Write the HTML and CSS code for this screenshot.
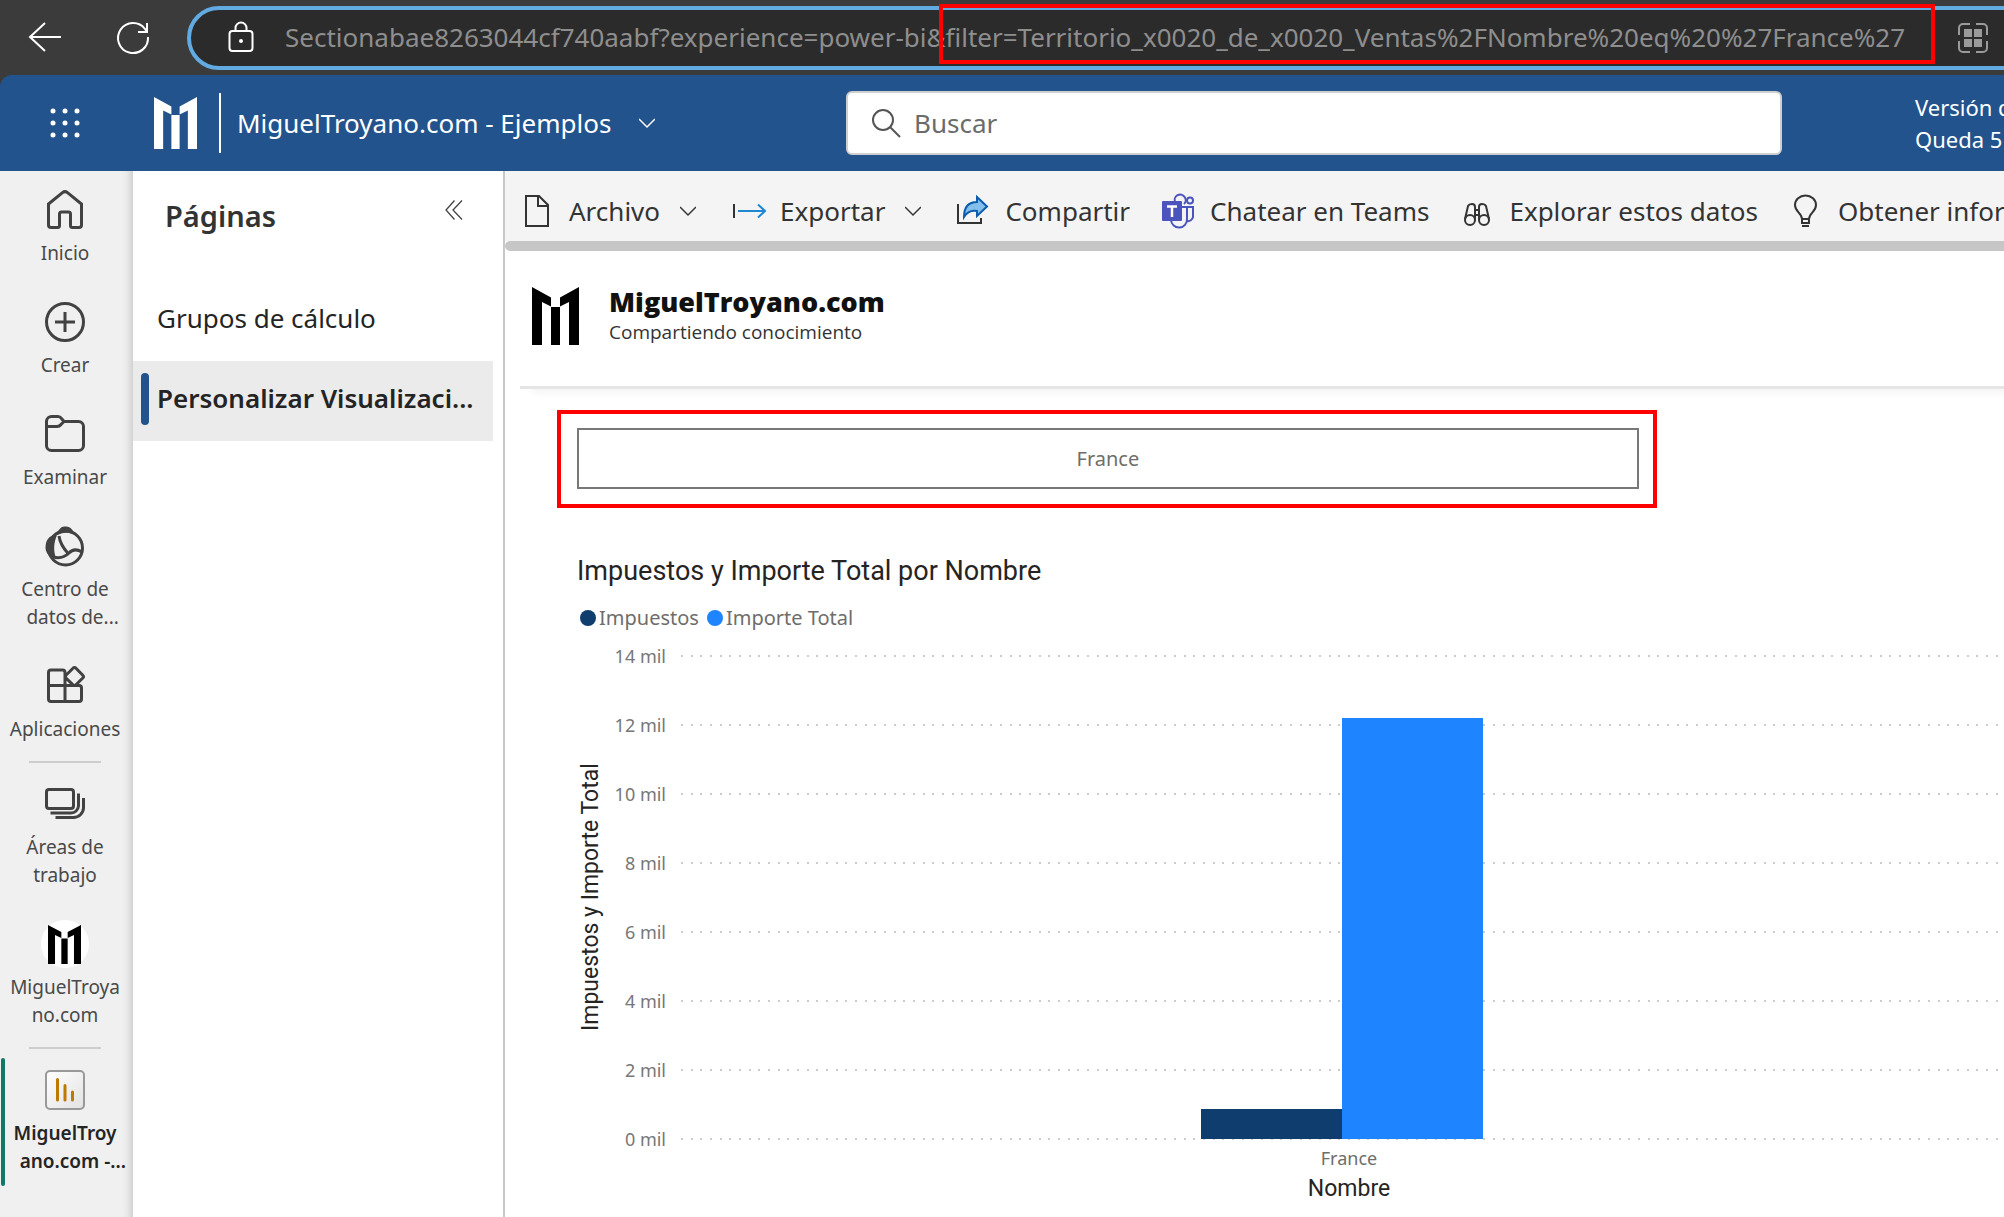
FILE: index.html
```
<!DOCTYPE html>
<html lang="es">
<head>
<meta charset="utf-8">
<title>MiguelTroyano.com - Ejemplos</title>
<link rel="stylesheet" href="styles.css">
</head>
<body>
<svg class="defs" aria-hidden="true">
  <symbol id="logo" viewBox="0 0 47 58" preserveAspectRatio="none">
    <path d="M0 0 19 10.5V19.5L10 15V58H0ZM47 0 28 10.5V19.5L37 15V58H47ZM19 20H28V58H19Z"/>
  </symbol>
  <symbol id="chevron" viewBox="0 0 16 16">
    <path d="M0 4 8 12 16 4" fill="none" stroke="currentColor" stroke-width="1.500"/>
  </symbol>
</svg>

<div class="browser">
  <button class="browser-btn" aria-label="Atrás">
    <svg width="34" height="32" viewBox="0 0 34 32"><path d="M33 15H2M17 1 2 15 17 29" fill="none" stroke="#fff" stroke-width="2"/></svg>
  </button>
  <button class="browser-btn" aria-label="Actualizar">
    <svg width="34" height="34" viewBox="0 0 34 34"><path d="M32 16A15 15 0 1 1 29 8L31 11M31 2V11H22" fill="none" stroke="#fff" stroke-width="2"/></svg>
  </button>
  <div class="address">
    <svg width="26" height="32" viewBox="0 0 26 32"><g fill="none" stroke="#fff" stroke-width="2"><rect x="1.500" y="9" width="23" height="20" rx="3"/><path d="M7.500 9V6A5.500 5.500 0 0 1 18.500 6V9"/></g><circle cx="13" cy="19" r="2" fill="#fff"/></svg>
    <input class="address-input" type="text" aria-label="Dirección" value="Sectionabae8263044cf740aabf?experience=power-bi&amp;filter=Territorio_x0020_de_x0020_Ventas%2FNombre%20eq%20%27France%27">
    <svg class="address-apps" width="30" height="30" viewBox="0 0 30 30"><g fill="none" stroke="#9a9a9a" stroke-width="2"><path d="M1 12V5A4 4 0 0 1 5 1H12M18 1H25A4 4 0 0 1 29 5V12M29 18V25A4 4 0 0 1 25 29H18M12 29H5A4 4 0 0 1 1 25V18"/></g><path d="M6 6H14V14H6ZM16 6H24V14H16ZM6 16H14V24H6ZM16 16H24V24H16Z" fill="#9a9a9a"/></svg>
    <span class="address-mark"></span>
  </div>
</div>

<header class="topbar">
  <button class="waffle" aria-label="Iniciador de aplicaciones">
    <svg width="32" height="32" viewBox="0 0 32 32" fill="#fff"><circle cx="4" cy="4" r="2.500"/><circle cx="16" cy="4" r="2.500"/><circle cx="28" cy="4" r="2.500"/><circle cx="4" cy="16" r="2.500"/><circle cx="16" cy="16" r="2.500"/><circle cx="28" cy="16" r="2.500"/><circle cx="4" cy="28" r="2.500"/><circle cx="16" cy="28" r="2.500"/><circle cx="28" cy="28" r="2.500"/></svg>
  </button>
  <svg class="topbar-logo" fill="#fff"><use href="#logo"/></svg>
  <button class="workspace">MiguelTroyano.com - Ejemplos <svg class="chevron"><use href="#chevron"/></svg></button>
  <label class="search">
    <svg width="30" height="30" viewBox="0 0 30 30"><g fill="none" stroke="#555" stroke-width="2"><circle cx="11" cy="12" r="10"/><path d="M18 19 28 29"/></g></svg>
    <input type="text" placeholder="Buscar" aria-label="Buscar">
  </label>
  <p class="trial">Versión de prueba:<br>Queda 5</p>
</header>

<div class="layout">
  <nav class="rail">
    <a href="#" class="rail-item"><svg viewBox="0 0 40 40"><path d="M3.500 14 17.500 2.600A4 4 0 0 1 22.500 2.600L36.500 14V35A2.500 2.500 0 0 1 34 37.500H27.500A2 2 0 0 1 25.500 35.500V24A2 2 0 0 0 23.500 22H16.500A2 2 0 0 0 14.500 24V35.500A2 2 0 0 1 12.500 37.500H6A2.500 2.500 0 0 1 3.500 35Z"/></svg><span>Inicio</span></a>
    <a href="#" class="rail-item"><svg viewBox="0 0 40 40"><circle cx="20" cy="20" r="18.500"/><path d="M20 10V30M10 20H30"/></svg><span>Crear</span></a>
    <a href="#" class="rail-item"><svg viewBox="0 0 40 40"><path d="M1.500 7A5 5 0 0 1 6.500 2.500H13Q15 2.500 16.500 4.500L19 7.500H33.500A5 5 0 0 1 38.500 12.500V31.500A5 5 0 0 1 33.500 36.500H6.500A5 5 0 0 1 1.500 31.500ZM1.500 12.500H12Q14.500 12.500 16 10.500L19 7.500"/></svg><span>Examinar</span></a>
    <a href="#" class="rail-item"><svg viewBox="0 0 40 40"><circle cx="20.500" cy="22" r="17"/><path d="M14 10C15 18 19 23 23.500 28M8 31C16 33 20 31 24 27C28 22.500 32 23 37 26"/><path d="M11 9.500C15 0 18 .500 21 .500C26 1 28 4 29.500 8.500C22 5.500 17 6.500 11 9.500ZM12 9C3 9 .500 15 .500 22C1 28 5 32 11 32C8 24 9 16 12 9Z" fill="#424242" stroke="none"/></svg><span>Centro de<br>datos de<i class="more">...</i></span></a>
    <a href="#" class="rail-item"><svg viewBox="0 0 40 40"><path d="M20 19.500V6.500A2.500 2.500 0 0 0 17.500 4H6A2.500 2.500 0 0 0 3.500 6.500V33A2.500 2.500 0 0 0 6 35.500H34A2.500 2.500 0 0 0 36.500 33V22A2.500 2.500 0 0 0 34 19.500H3.500M20 19.500V35.500M28 2.200 21 9.200A2 2 0 0 0 21 12L28 18.800A2 2 0 0 0 31 18.800L37.800 12A2 2 0 0 0 37.800 9.200L31 2.200A2 2 0 0 0 28 2.200Z"/></svg><span>Aplicaciones</span></a>
    <hr>
    <a href="#" class="rail-item"><svg viewBox="0 0 40 40"><rect x="1.500" y="5.500" width="27" height="19" rx="2.500"/><path d="M33.500 9.500V22A7.500 7.500 0 0 1 26 29H5.500M38.500 14V24A10 10 0 0 1 28.500 33.500H10.500"/></svg><span>Áreas de<br>trabajo</span></a>
    <a href="#" class="rail-item"><svg viewBox="0 0 40 40"><circle cx="20" cy="20" r="24" fill="#fff" stroke="none"/><use href="#logo" x="3" y="1" width="33" height="39" fill="#000" stroke="none"/></svg><span>MiguelTroya<br>no.com</span></a>
    <hr>
    <a href="#" class="rail-item current"><svg viewBox="0 0 40 40"><defs><linearGradient id="tile" x2="1" y2="1"><stop stop-color="#fff"/><stop offset="1" stop-color="#e2e2e2"/></linearGradient></defs><rect x="1" y="1" width="38" height="38" rx="4" fill="url(#tile)" stroke="#999" stroke-width="2"/><path d="M12.500 9.500V30M20 15.500V30M27.500 22V30" stroke="#bd7a00" stroke-width="3" stroke-linecap="round"/></svg><span>MiguelTroy<br>ano.com -<i class="more">...</i></span></a>
  </nav>

  <aside class="pages">
    <div class="pages-head">
      <h2>Páginas</h2>
      <button aria-label="Contraer"><svg width="18" height="20" viewBox="0 0 18 20"><path d="M9.500 .500 1 10 9.500 19.500M17 .500 8 10 17 19.500" fill="none" stroke="#444" stroke-width="1.300"/></svg></button>
    </div>
    <a href="#" class="page">Grupos de cálculo</a>
    <a href="#" class="page selected">Personalizar Visualizaci...</a>
  </aside>

  <main class="main">
    <div class="toolbar">
      <button><svg class="tool-icon" viewBox="0 0 32 32"><path d="M5 1H18L27 10V31H5ZM17 1V11H27" fill="none" stroke="#333" stroke-width="2"/></svg>Archivo<svg class="chevron"><use href="#chevron"/></svg></button>
      <button><svg class="tool-icon" viewBox="0 0 32 32"><path d="M2 9V23" stroke="#333" stroke-width="2"/><path d="M6 16H33M26 9.500 33 16 26 22.500" fill="none" stroke="#1e88d2" stroke-width="2"/></svg>Exportar<svg class="chevron"><use href="#chevron"/></svg></button>
      <button><svg class="tool-icon" viewBox="0 0 32 32"><path d="M1 9V28H24V23" fill="none" stroke="#333" stroke-width="2"/><path d="M20 2 30 11.500 20 21V16C14 15 10 17 7 22C7 12 12 7 20 7Z" fill="#83beec" stroke="#0b5cab" stroke-width="2"/></svg>Compartir</button>
      <button><svg class="tool-icon" viewBox="0 0 32 32"><g fill="none" stroke="#4b53bc" stroke-width="2"><path d="M13 7A5.500 5.500 0 1 1 22 9M9 25A8 8 0 0 0 25 24V12H20M25 12H31V22A5 5 0 0 1 25 26"/><circle cx="28" cy="5.500" r="3"/></g><rect y="6" width="20" height="20" rx="1" fill="#4b53bc"/><path d="M5 11.500H15M10 11.500V22" stroke="#fff" stroke-width="2.500"/></svg>Chatear en Teams</button>
      <button><svg class="tool-icon" viewBox="0 0 32 32"><g fill="none" stroke="#333" stroke-width="2"><circle cx="9" cy="25" r="5"/><circle cx="23" cy="25" r="5"/><path d="M4 24 7 11Q8 9 11 9Q14 9 14 12V25M28 24 25 11Q24 9 21 9Q18 9 18 12V25M14 15H18M14 20H18"/></g></svg>Explorar estos datos</button>
      <button><svg class="tool-icon" viewBox="0 0 32 32"><path d="M12 24C12 18 5 17 5 10A10 9 0 0 1 26 10C26 17 19 18 19 24ZM12 24V28H19V24M12 31H19" fill="none" stroke="#333" stroke-width="2"/></svg>Obtener información</button>
    </div>
    <div class="scrollbar"></div>

    <div class="report-head">
      <svg class="report-logo"><use href="#logo"/></svg>
      <div>
        <h1>MiguelTroyano.com</h1>
        <p>Compartiendo conocimiento</p>
      </div>
    </div>

    <div class="report">
      <div class="slicer"><button>France</button></div>

      <section class="chart">
        <h2>Impuestos y Importe Total por Nombre</h2>
        <ul class="legend">
          <li><i class="dot navy"></i>Impuestos</li>
          <li><i class="dot blue"></i>Importe Total</li>
        </ul>
        <div class="chart-body">
          <div class="y-title">Impuestos y Importe Total</div>
          <div class="plot">
            <div class="tick"><span>14 mil</span></div>
            <div class="tick"><span>12 mil</span></div>
            <div class="tick"><span>10 mil</span></div>
            <div class="tick"><span>8 mil</span></div>
            <div class="tick"><span>6 mil</span></div>
            <div class="tick"><span>4 mil</span></div>
            <div class="tick"><span>2 mil</span></div>
            <div class="tick"><span>0 mil</span></div>
            <div class="bars">
              <div class="bar navy" style="height:6.2%"></div>
              <div class="bar blue" style="height:87.1%"></div>
            </div>
          </div>
        </div>
        <div class="x-axis">
          <div class="x-label">France</div>
          <div class="x-title">Nombre</div>
        </div>
      </section>
    </div>
  </main>
</div>
</body>
</html>
```
FILE: styles.css
```
* { box-sizing: border-box; margin: 0; padding: 0; }

body {
  display: flex;
  flex-direction: column;
  min-height: 100vh;
  overflow: hidden;
  background: #fff;
  color: #242424;
  font-family: "Noto Sans", "Open Sans", sans-serif;
  font-size: 26px;
}

button, input { font: inherit; color: inherit; background: none; border: 0; outline: 0; }
a { color: inherit; text-decoration: none; }
svg { flex: none; overflow: visible; }
i { font-style: normal; }
.defs { position: absolute; width: 0; height: 0; }
.chevron { width: 16px; height: 16px; }

/* Browser bar */
.browser {
  display: flex;
  align-items: center;
  height: 75px;
  padding-left: 28px;
  overflow: hidden;
  background: #3b3b3b;
}
.browser-btn { display: flex; width: 34px; margin-right: 54px; }
.browser-btn + .browser-btn { margin-right: 37px; }
.address {
  position: relative;
  flex: 1;
  display: flex;
  align-items: center;
  height: 64px;
  margin-right: -40px;
  padding: 0 52px 0 37px;
  border: 4px solid #62aae2;
  border-radius: 32px;
  background: #2b2b2b;
}
.address-input { flex: 1; min-width: 0; height: 48px; margin-left: 31px; padding-bottom: 2px; color: #8e8e8e; }
.address-mark {
  position: absolute;
  top: -6px;
  left: 748px;
  width: 996px;
  height: 60px;
  border: 4px solid #f00;
}

/* Blue top bar */
.topbar {
  display: flex;
  align-items: center;
  height: 96px;
  padding-left: 49px;
  overflow: hidden;
  border-top-left-radius: 12px;
  background: #22538c;
  box-shadow: -12px -12px 0 #3b3b3b;
  color: #fff;
}
.waffle { display: flex; }
.topbar-logo { width: 43px; height: 52px; margin: 0 22px 0 73px; }
.workspace {
  display: flex;
  align-items: center;
  gap: 28px;
  height: 60px;
  padding-left: 16px;
  border-left: 2px solid #fff;
  white-space: nowrap;
}
.search {
  flex: 1;
  display: flex;
  align-items: center;
  gap: 12px;
  max-width: 936px;
  height: 64px;
  margin: 0 133px 0 auto;
  padding-left: 24px;
  border: 2px solid #cfcfcf;
  border-radius: 6px;
  background: #fff;
}
.search input { flex: 1; min-width: 0; }
.search input::placeholder { color: #6b6b6b; opacity: 1; }
.trial { width: 89px; font-size: 22px; line-height: 32px; white-space: nowrap; }

/* Columns */
.layout { flex: 1; display: flex; }

.rail {
  flex: none;
  width: 133px;
  background: #f0f0f0;
  box-shadow: inset -10px 0 8px -8px #c4c4c4;
}
.rail-item {
  display: flex;
  flex-direction: column;
  align-items: center;
  gap: 9px;
  padding: 19px 3px 16px 0;
  color: #494949;
  font-size: 19px;
  line-height: 28px;
  text-align: center;
}
.rail-item svg { width: 40px; height: 40px; fill: none; stroke: #424242; stroke-width: 3; }
.rail hr { width: 72px; height: 2px; margin: 2px 0 2px 29px; border: 0; background: #cdcdcd; }
.rail .current { position: relative; color: #242424; font-weight: 600; }
.current::before {
  content: "";
  position: absolute;
  top: 7px;
  bottom: 5px;
  left: 1px;
  width: 4px;
  border-radius: 2px;
  background: #117865;
}
.more { display: inline-block; width: 0; }

.pages { flex: none; width: 372px; border-right: 2px solid #c8c8c8; }
.pages-head {
  display: flex;
  justify-content: space-between;
  align-items: flex-start;
  height: 110px;
  padding: 25px 40px 0 32px;
  color: #333;
}
.pages-head h2 { font-size: 29px; font-weight: 600; line-height: 40px; }
.pages-head button { display: flex; padding-top: 4px; }
.page {
  display: block;
  height: 80px;
  margin-right: 10px;
  padding-left: 24px;
  line-height: 74px;
  white-space: nowrap;
}
.page.selected { position: relative; background: #ebebeb; font-weight: 600; }
.page.selected::before {
  content: "";
  position: absolute;
  top: 12px;
  left: 8px;
  width: 8px;
  height: 52px;
  border-radius: 4px;
  background: #22538c;
}

.main { flex: 1; min-width: 0; overflow: hidden; }
.toolbar {
  display: flex;
  gap: 32px;
  height: 70px;
  padding: 10px 0 0 16px;
  background: #f4f4f4;
}
.toolbar button { display: flex; align-items: center; gap: 16px; color: #333; white-space: nowrap; }
.toolbar .chevron { margin: 0 4px; }
.tool-icon { width: 32px; height: 32px; }
.scrollbar { height: 10px; border-radius: 5px 0 0 5px; background: #c6c6c6; }

/* Report */
.report-head {
  display: flex;
  gap: 30px;
  height: 138px;
  margin-left: 15px;
  padding: 36px 0 0 12px;
  border-bottom: 3px solid #e5e5e5;
  box-shadow: 8px 8px 8px -4px #f4f4f4;
  font-family: "Open Sans", sans-serif;
}
.report-logo { width: 47px; height: 58px; }
.report-head h1 { color: #111; font-size: 27px; font-weight: 800; line-height: 30px; }
.report-head p { color: #333; font-size: 19px; line-height: 30px; }

.report { padding: 21px 0 0 52px; }
.slicer {
  width: 76%;
  height: 98px;
  padding: 14px 14px 15px 16px;
  border: 4px solid #f00;
}
.slicer button {
  width: 100%;
  height: 100%;
  border: 2px solid #7a7876;
  color: #6f6d6b;
  font-size: 20px;
}

.chart { margin: 48px -13px 0 0; padding-left: 20px; }
.chart h2 { font: 400 27px/30px Roboto, sans-serif; color: #252423; }
.legend {
  display: flex;
  gap: 8px;
  margin: 20px 0 14px 3px;
  color: #6f6d6b;
  font-size: 20px;
  line-height: 24px;
  list-style: none;
}
.legend li { display: flex; align-items: center; gap: 3px; }
.dot { width: 16px; height: 16px; border-radius: 50%; }
.navy { background: #0f3d6e; }
.blue { background: #1e84ff; }

.chart-body { display: flex; }
.y-title {
  width: 28px;
  color: #252423;
  font: 400 23px/28px Roboto, sans-serif;
  text-align: center;
  writing-mode: vertical-rl;
  transform: rotate(180deg);
}
.plot { position: relative; flex: 1; }
.tick {
  display: flex;
  gap: 15px;
  height: 69px;
  color: #777;
  font-size: 18px;
  line-height: 24px;
}
.tick span { width: 61px; text-align: right; }
.tick:nth-child(8) { height: 24px; }
.tick::after {
  content: "";
  flex: 1;
  height: 2px;
  margin-top: 11px;
  background: linear-gradient(90deg, #ccc 2px, transparent 2px 10px, #ccc 10px 12px, transparent 12px 19px, #ccc 19px 21px, transparent 21px) 0 0 / 29px 2px;
}
.bars {
  position: absolute;
  inset: 12px 15px 12px 76px;
  display: flex;
  justify-content: center;
  align-items: flex-end;
}
.bar { width: 141px; }

.x-axis { padding-left: 104px; text-align: center; }
.x-label { color: #6f6d6b; font-size: 18px; line-height: 14px; }
.x-title { margin-top: 9px; color: #252423; font: 400 23px/30px Roboto, sans-serif; }
```
